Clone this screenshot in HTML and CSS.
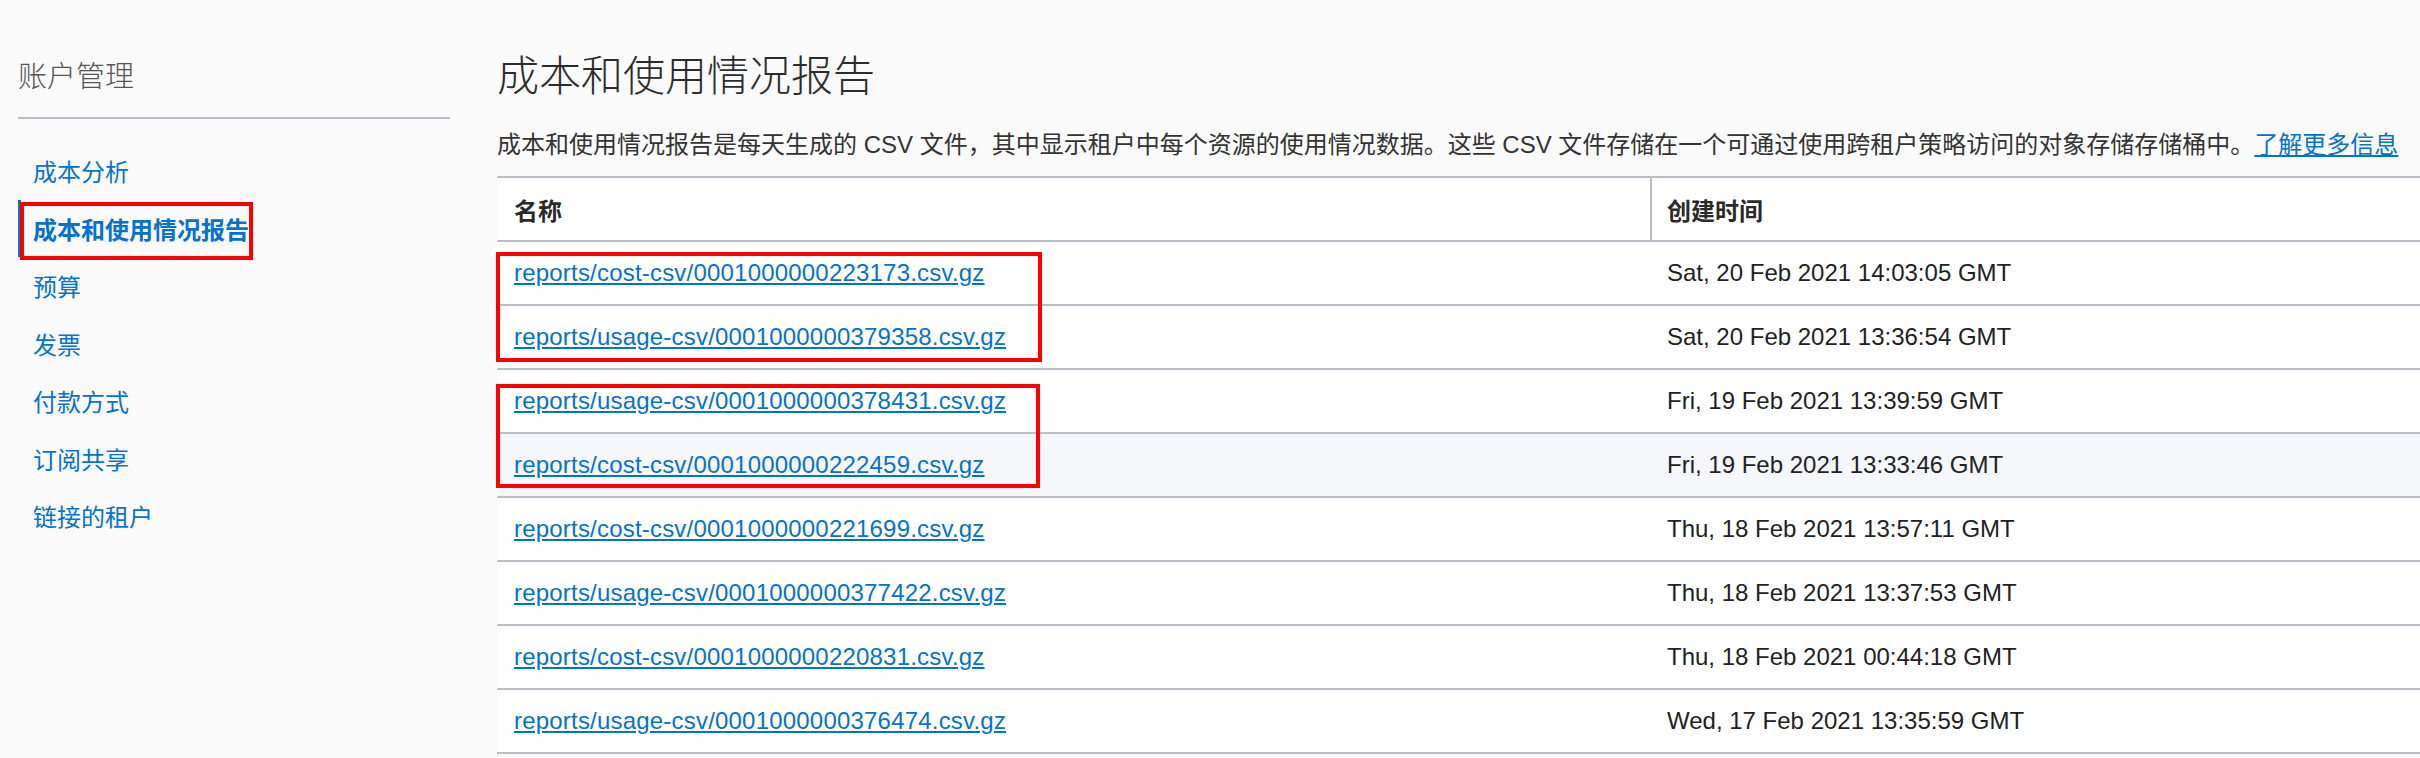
FILE: index.html
```html
<!DOCTYPE html>
<html lang="zh-CN">
<head>
<meta charset="utf-8">
<title>成本和使用情况报告</title>
<link rel="stylesheet" href="styles.css">
</head>
<body>
<div class="page">
  <aside class="sidebar">
    <h2 class="side-title">账户管理</h2>
    <div class="side-divider"></div>
    <nav class="side-nav">
      <a class="nav-item" href="#">成本分析</a>
      <a class="nav-item active" href="#">成本和使用情况报告<span class="mark mark-nav"></span></a>
      <a class="nav-item" href="#">预算</a>
      <a class="nav-item" href="#">发票</a>
      <a class="nav-item" href="#">付款方式</a>
      <a class="nav-item" href="#">订阅共享</a>
      <a class="nav-item" href="#">链接的租户</a>
    </nav>
  </aside>
  <main class="main">
    <h1 class="title">成本和使用情况报告</h1>
    <p class="desc">成本和使用情况报告是每天生成的 CSV 文件，其中显示租户中每个资源的使用情况数据。这些 CSV 文件存储在一个可通过使用跨租户策略访问的对象存储存储桶中。<a href="#" class="link">了解更多信息</a></p>
    <div class="table">
      <div class="row head">
        <div class="cell c-name">名称</div>
        <div class="cell c-time">创建时间</div>
      </div>
      <div class="row">
        <div class="cell c-name"><a class="link" href="#">reports/cost-csv/0001000000223173.csv.gz</a></div>
        <div class="cell c-time">Sat, 20 Feb 2021 14:03:05 GMT</div>
      </div>
      <div class="row">
        <div class="cell c-name"><a class="link" href="#">reports/usage-csv/0001000000379358.csv.gz</a></div>
        <div class="cell c-time">Sat, 20 Feb 2021 13:36:54 GMT</div>
      </div>
      <div class="row">
        <div class="cell c-name"><a class="link" href="#">reports/usage-csv/0001000000378431.csv.gz</a></div>
        <div class="cell c-time">Fri, 19 Feb 2021 13:39:59 GMT</div>
      </div>
      <div class="row hover">
        <div class="cell c-name"><a class="link" href="#">reports/cost-csv/0001000000222459.csv.gz</a></div>
        <div class="cell c-time">Fri, 19 Feb 2021 13:33:46 GMT</div>
      </div>
      <div class="row">
        <div class="cell c-name"><a class="link" href="#">reports/cost-csv/0001000000221699.csv.gz</a></div>
        <div class="cell c-time">Thu, 18 Feb 2021 13:57:11 GMT</div>
      </div>
      <div class="row">
        <div class="cell c-name"><a class="link" href="#">reports/usage-csv/0001000000377422.csv.gz</a></div>
        <div class="cell c-time">Thu, 18 Feb 2021 13:37:53 GMT</div>
      </div>
      <div class="row">
        <div class="cell c-name"><a class="link" href="#">reports/cost-csv/0001000000220831.csv.gz</a></div>
        <div class="cell c-time">Thu, 18 Feb 2021 00:44:18 GMT</div>
      </div>
      <div class="row">
        <div class="cell c-name"><a class="link" href="#">reports/usage-csv/0001000000376474.csv.gz</a></div>
        <div class="cell c-time">Wed, 17 Feb 2021 13:35:59 GMT</div>
      </div>
      <span class="mark mark-a"></span>
      <span class="mark mark-b"></span>
    </div>
  </main>
</div>
</body>
</html>
```
FILE: styles.css
```css
* { box-sizing: border-box; }
html, body {
  margin: 0;
  padding: 0;
  background: #fafafa;
  overflow: hidden;
}
body {
  font-family: "Liberation Sans", "Noto Sans CJK SC", sans-serif;
  font-size: 24px;
  color: #333;
}
.page {
  display: flex;
  width: 2420px;
  height: 758px;
}
.sidebar {
  width: 497px;
  flex: none;
  padding: 50px 0 0 18px;
}
.side-title {
  margin: 0;
  width: 432px;
  height: 48px;
  display: flex;
  align-items: center;
  font-size: 29px;
  font-weight: 300;
  color: #555;
}
.side-divider {
  width: 432px;
  height: 2px;
  margin-top: 19px;
  background: #b9bdc6;
}
.side-nav {
  margin-top: 23px;
  display: flex;
  flex-direction: column;
}
.nav-item {
  position: relative;
  display: flex;
  align-items: center;
  height: 57.5px;
  padding-left: 12px;
  border-left: 3px solid transparent;
  color: #0572ce;
  text-decoration: none;
  font-size: 24px;
}
.nav-item.active {
  border-left-color: #0572ce;
  font-weight: 700;
}
.mark {
  position: absolute;
  border: 4px solid #ff0000;
  pointer-events: none;
}
.mark-nav {
  left: -1px;
  top: 2px;
  width: 233px;
  height: 58px;
}
.main {
  flex: 1;
  min-width: 0;
  padding-top: 40px;
}
.title {
  margin: 0;
  height: 64px;
  display: flex;
  align-items: center;
  font-size: 42px;
  font-weight: 300;
  color: #2c2c2c;
}
.desc {
  margin: 14px 0 0;
  height: 48px;
  display: flex;
  align-items: center;
  font-size: 24px;
  color: #333;
  white-space: nowrap;
}
.link {
  color: #0572ce;
  text-decoration: underline;
}
.table {
  position: relative;
  margin-top: 10px;
  background: #fff;
  border-top: 2px solid #b9bec6;
}
.row {
  display: grid;
  grid-template-columns: 1155px 1fr;
  height: 64px;
  border-bottom: 2px solid #b9bec6;
}
.row.hover { background: #f5f7fb; }
.cell {
  display: flex;
  align-items: center;
  white-space: nowrap;
}
.c-name { padding-left: 17px; }
.c-name .link { letter-spacing: 0.2px; }
.c-time { padding-left: 15px; color: #222; }
.head .cell {
  font-weight: 700;
  color: #2a2a2a;
}
.head .c-name { border-right: 2px solid #b9bec6; }
.mark-a {
  left: -1px;
  top: 74px;
  width: 546px;
  height: 110px;
}
.mark-b {
  left: -1px;
  top: 206px;
  width: 544px;
  height: 104px;
}
```
